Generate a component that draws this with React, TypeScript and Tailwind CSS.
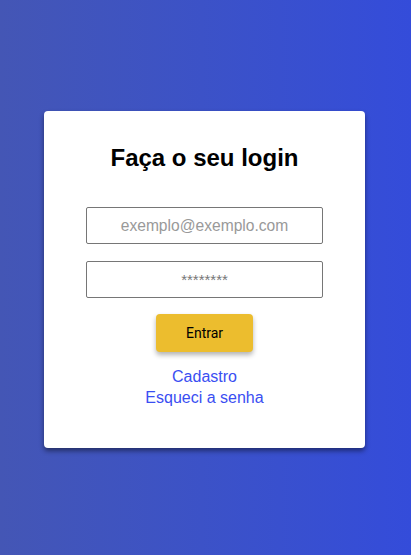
export default function App() {
  return (
    <div className="min-h-screen w-full flex items-center justify-center bg-gradient-to-r from-[#4456b5] to-[#344cda] font-['Liberation_Sans',Arial,sans-serif]">
      <div className="w-[321px] bg-white rounded-[4px] shadow-[0_3px_5px_rgba(0,0,0,0.45)] flex flex-col items-center pt-[33px] pb-[40px] mt-[4px] -ml-[2px]">
        <h1 className="text-[24px] leading-[28px] font-bold text-black">Faça o seu login</h1>
        <form className="w-full flex flex-col items-center mt-[35px]">
          <input
            type="email"
            placeholder="exemplo@exemplo.com"
            className="w-[237px] h-[37px] border border-[#767676] rounded-[2px] text-center text-[15.6px] placeholder:text-[#999999] outline-none"
          />
          <input
            type="password"
            placeholder="********"
            className="w-[237px] h-[37px] mt-[17px] border border-[#767676] rounded-[2px] text-center text-[15px] placeholder:text-[#777777] outline-none"
          />
          <button
            type="button"
            className="mt-[16px] w-[97px] h-[38px] bg-[#ecbd2e] rounded-[4px] shadow-[0_3px_5px_rgba(0,0,0,0.3)] text-[14px] text-black font-['Roboto',sans-serif]"
          >
            Entrar
          </button>
          <div className="mt-[14px] flex flex-col items-center text-[16px] leading-[21px] text-[#3a4ef2]">
            <a href="#">Cadastro</a>
            <a href="#">Esqueci a senha</a>
          </div>
        </form>
      </div>
    </div>
  );
}
